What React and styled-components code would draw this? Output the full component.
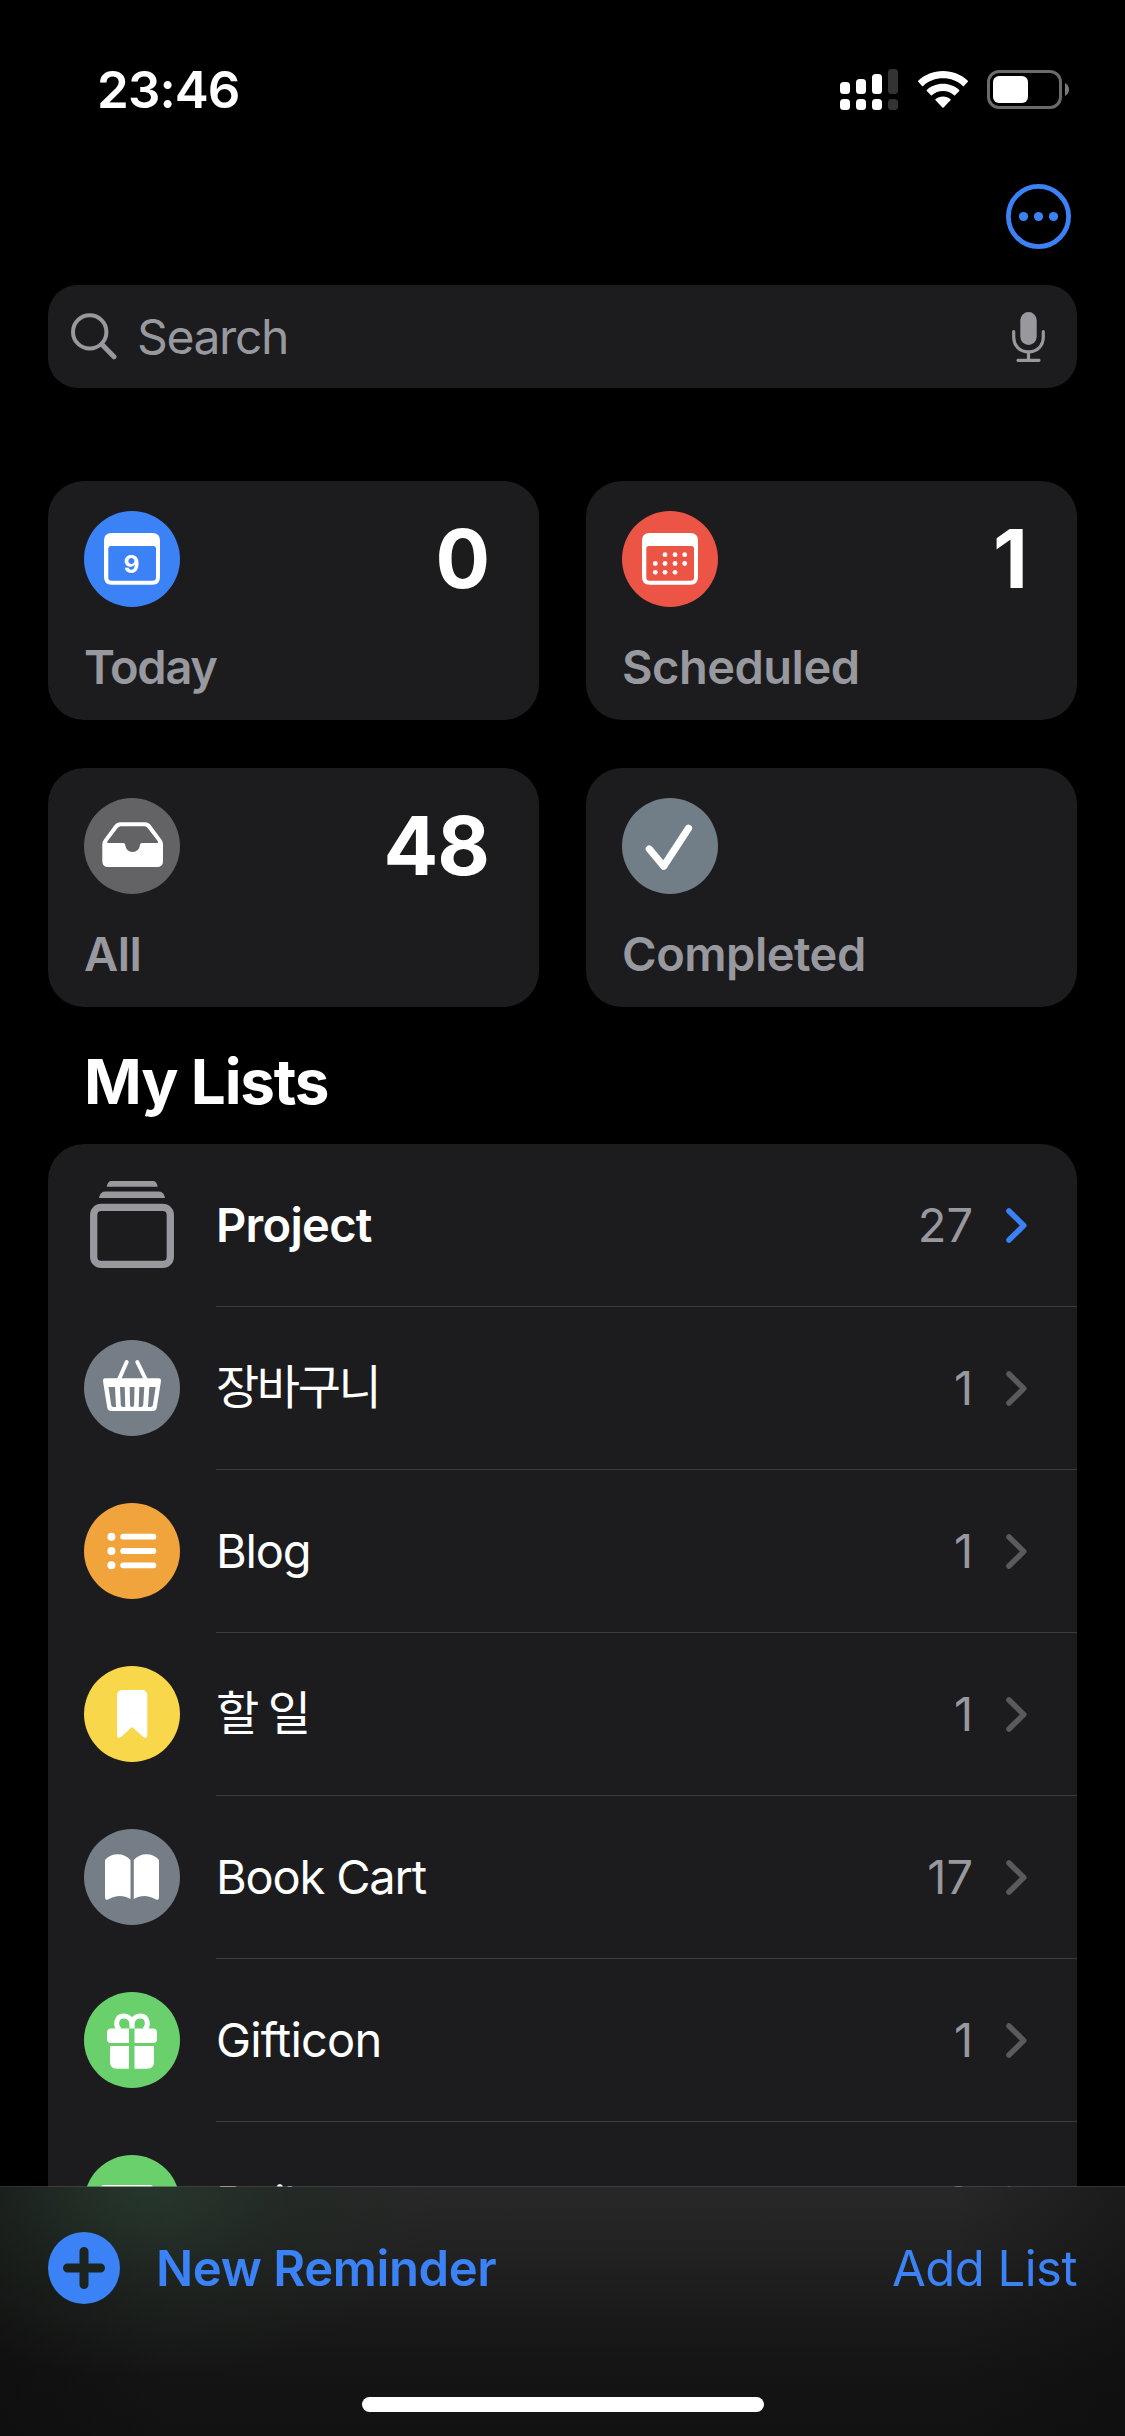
import styled, { createGlobalStyle } from "styled-components";

const GlobalStyle = createGlobalStyle`
  * {
    box-sizing: border-box;
  }
  body {
    margin: 0;
    background: #000;
    color: #fff;
    font-family: Inter, "Noto Sans CJK KR", sans-serif;
  }
`;

const Screen = styled.div`
  position: relative;
  width: 1125px;
  height: 2436px;
  overflow: hidden;
  background: #000;
`;

const StatusBar = styled.div`
  height: 178px;
  display: flex;
  align-items: center;
  justify-content: space-between;
  padding: 0 56px 0 97px;
`;

const Time = styled.span`
  font-size: 51px;
  font-weight: 600;
  letter-spacing: -0.9px;
`;

const StatusIcons = styled.div`
  display: flex;
  align-items: center;
  gap: 19px;
`;

const Toolbar = styled.div`
  height: 107px;
  display: flex;
  justify-content: flex-end;
  padding: 6px 54px 0 0;
`;

const SearchBar = styled.div`
  height: 103px;
  margin: 0 48px;
  padding: 0 32px 0 23px;
  display: flex;
  align-items: center;
  gap: 20px;
  border-radius: 30px;
  background: #1c1c1e;
  color: #98989f;
`;

const Placeholder = styled.span`
  flex: 1;
  font-size: 48px;
  letter-spacing: -1.4px;
`;

const CardGrid = styled.div`
  display: grid;
  grid-template-columns: 491px 491px;
  grid-auto-rows: 239px;
  gap: 48px 47px;
  margin: 93px 48px 0;
`;

const Card = styled.div`
  display: flex;
  flex-direction: column;
  justify-content: space-between;
  padding: 30px 50px 24px 36px;
  border-radius: 36px;
  background: #1c1c1e;
`;

const CardTop = styled.div`
  height: 96px;
  display: flex;
  align-items: center;
  justify-content: space-between;
`;

const CardCount = styled.span`
  font-size: 81px;
  font-weight: 700;
  line-height: 96px;
  letter-spacing: -1px;
`;

const CardLabel = styled.span`
  font-size: 47px;
  font-weight: 600;
  line-height: 58px;
  color: #98989f;
  letter-spacing: ${(props) => props.$spacing};
`;

const IconCircle = styled.div`
  width: 96px;
  height: 96px;
  border-radius: 50%;
  flex-shrink: 0;
  background: ${(props) => props.$color};
`;

const SectionTitle = styled.h2`
  height: 137px;
  margin: 0;
  padding: 12px 0 0 84px;
  display: flex;
  align-items: center;
  font-size: 62px;
  font-weight: 700;
  letter-spacing: -1.2px;
`;

const ListBox = styled.div`
  margin: 0 48px;
  padding-left: 36px;
  border-radius: 36px 36px 0 0;
  background: #1c1c1e;
`;

const ListRow = styled.div`
  height: 163px;
  display: flex;
  gap: 36px;
`;

const RowIcon = styled.div`
  padding-top: 33px;
`;

const RowBody = styled.div`
  flex: 1;
  display: flex;
  align-items: center;
  padding-right: 50px;
  border-bottom: 1px solid #3d3d41;
`;

const RowName = styled.span`
  flex: 1;
  padding-bottom: ${(props) => (props.$korean ? "9px" : "2px")};
  font-size: 47px;
  font-weight: ${(props) => (props.$bold ? 600 : 400)};
  letter-spacing: ${(props) => props.$spacing};
`;

const RowCount = styled.span`
  margin-right: 33px;
  padding-bottom: 2px;
  font-size: 47px;
  color: #98989f;
`;

const BottomBar = styled.div`
  position: absolute;
  left: 0;
  right: 0;
  bottom: 0;
  height: 250px;
  display: flex;
  flex-direction: column;
  align-items: center;
  border-top: 1px solid rgba(84, 84, 88, 0.6);
  background:
    radial-gradient(
      ellipse 290px 190px at 145px 0px,
      rgba(38, 60, 46, 0.75),
      rgba(30, 44, 34, 0.4) 50%,
      rgba(20, 24, 20, 0)
    ),
    linear-gradient(
      90deg,
      rgba(12, 12, 12, 0.55),
      rgba(12, 12, 12, 0) 15%,
      rgba(12, 12, 12, 0) 85%,
      rgba(12, 12, 12, 0.45)
    ),
    linear-gradient(#282828, #222 25%, #191919 55%, #141414 75%, #121212);
  background-clip: padding-box;
`;

const Actions = styled.div`
  width: 100%;
  height: 162px;
  padding: 0 48px;
  display: flex;
  align-items: center;
  justify-content: space-between;
  color: #3b82f7;
`;

const NewReminder = styled.div`
  display: flex;
  align-items: center;
  gap: 36px;
  font-size: 49px;
  font-weight: 600;
  letter-spacing: -0.4px;
`;

const AddList = styled.span`
  font-size: 49px;
  letter-spacing: -0.5px;
`;

const HomeIndicator = styled.div`
  width: 402px;
  height: 15px;
  margin-top: 48px;
  border-radius: 8px;
  background: #fff;
`;

function SignalIcon() {
  const bars = [12, 15, 20, 25];
  return (
    <svg width="59" height="41" viewBox="0 0 59 41">
      {bars.map((h, i) => (
        <g key={h} fill={i === 3 ? "#333" : "#fff"}>
          <rect x={i * 16} y={25 - h} width="10" height={h} rx="3.5" />
          <rect x={i * 16} y="30" width="10" height="11" rx="3.5" />
        </g>
      ))}
    </svg>
  );
}

function WifiIcon() {
  return (
    <svg width="50" height="37" viewBox="0 0 50 37" fill="#fff">
      <path d="M25 0C34.5 0 43.3 3.6 49.8 9.7Q50.3 10.2 49.8 10.7L45.9 14.9Q45.4 15.4 44.8 14.9C39.5 9.9 32.5 7.3 25 7.3S10.5 9.9 5.2 14.9Q4.6 15.4 4.1 14.9L.2 10.7Q-.3 10.2 .2 9.7C6.7 3.6 15.5 0 25 0Z" />
      <path d="M25 12.8C31.2 12.8 36.9 15.1 41.2 19Q41.7 19.5 41.2 20L37.1 24.3Q36.6 24.8 36.1 24.3C33.1 21.6 29.3 20.1 25 20.1S16.9 21.6 13.9 24.3Q13.4 24.8 12.9 24.3L8.8 20Q8.3 19.5 8.8 19C13.1 15.1 18.8 12.8 25 12.8Z" />
      <path d="M25 25.6C27.8 25.6 30.5 26.6 32.5 28.3Q33 28.8 32.5 29.3L25.6 36.5Q25 37 24.4 36.5L17.5 29.3Q17 28.8 17.5 28.3C19.5 26.6 22.2 25.6 25 25.6Z" />
    </svg>
  );
}

function BatteryIcon() {
  return (
    <svg width="82" height="39" viewBox="0 0 82 39">
      <rect x="1.5" y="1.5" width="72" height="36" rx="10.5" fill="none" stroke="#6b6b6b" strokeWidth="3" />
      <rect x="6" y="6" width="35" height="27" rx="6" fill="#fff" />
      <path d="M78 13C80.6 14.2 82 16.7 82 19.5S80.6 24.8 78 26Z" fill="#7a7a7a" />
    </svg>
  );
}

function MoreIcon() {
  return (
    <svg width="65" height="65" viewBox="0 0 65 65" fill="#3b82f7">
      <circle cx="32.5" cy="32.5" r="30.1" fill="none" stroke="#3b82f7" strokeWidth="4.8" />
      <circle cx="17.5" cy="32.5" r="4.6" />
      <circle cx="32.5" cy="32.5" r="4.6" />
      <circle cx="47.5" cy="32.5" r="4.6" />
    </svg>
  );
}

function SearchIcon() {
  return (
    <svg width="46" height="47" viewBox="0 0 46 47" fill="none" stroke="currentColor" strokeLinecap="round">
      <circle cx="18.7" cy="18.9" r="16.7" strokeWidth="4" />
      <path d="M31.5 32L43 43.8" strokeWidth="5" />
    </svg>
  );
}

function MicIcon() {
  return (
    <svg width="33" height="50" viewBox="0 0 33 50" fill="none" stroke="currentColor" strokeWidth="3.2" strokeLinecap="round">
      <rect x="8.3" y="0" width="16.4" height="33" rx="8.2" fill="currentColor" stroke="none" />
      <path d="M1.7 19.5V25C1.7 34 8 39.8 16.5 39.8S31.3 34 31.3 25V19.5M16.5 40V48M6 48.3H27" />
    </svg>
  );
}

function Chevron({ color }) {
  return (
    <svg width="21" height="35" viewBox="0 0 21 35" fill="none" stroke={color} strokeWidth="5.6" strokeLinecap="round" strokeLinejoin="round">
      <path d="M3 3L17.7 17.5L3 32" />
    </svg>
  );
}

function PlusIcon() {
  return (
    <svg width="72" height="72" viewBox="0 0 72 72">
      <circle cx="36" cy="36" r="36" fill="#3b82f7" />
      <path d="M36 19.5V52.5M19.5 36H52.5" stroke="#1c241f" strokeWidth="9" strokeLinecap="round" />
    </svg>
  );
}

const Glyph = ({ children }) => (
  <svg width="96" height="96" viewBox="0 0 96 96" fill="#fff" display="block">
    {children}
  </svg>
);

const calendarFrame =
  "M27.5 22H68.5Q76 22 76 29.5V66Q76 73.7 68.5 73.7H27.5Q20 73.7 20 66V29.5Q20 22 27.5 22ZM27 35Q24.3 35 24.3 37.5V66.5Q24.3 69.7 27.5 69.7H68.5Q72 69.7 72 66.5V37.5Q72 35 69.3 35Z";

const TodayGlyph = () => (
  <Glyph>
    <path fillRule="evenodd" d={calendarFrame} />
    <text x="47.5" y="61.5" textAnchor="middle" fontSize="24.5" fontWeight="700">
      9
    </text>
  </Glyph>
);

const ScheduledGlyph = () => {
  const rows = [
    [43, 53, 62.7],
    [33.3, 43, 53, 62.7],
    [33.3, 43, 53],
  ];
  return (
    <Glyph>
      <path fillRule="evenodd" d={calendarFrame} />
      {rows.map((row, i) =>
        row.map((x) => <circle key={`${i}-${x}`} cx={x} cy={43.7 + i * 8.8} r="2.4" />)
      )}
    </Glyph>
  );
};

const AllGlyph = () => (
  <Glyph>
    <path
      fillRule="evenodd"
      d="M36.5 24.3H61Q64.7 24.3 66.8 27.3L77.3 41.5Q79 43.8 79 46.5V63Q79 69 73 69H24.3Q18.3 69 18.3 63V46.5Q18.3 43.8 20 41.5L30.5 27.3Q32.7 24.3 36.5 24.3ZM36.7 28.3Q34.9 28.3 33.8 29.8L23.3 43.5Q22.5 45 24.5 45H39.3Q41 45 41.2 46.8C41.7 51.2 44.4 54 48.6 54S55.5 51.2 56 46.8Q56.2 45 57.9 45H72.8Q74.8 45 74 43.5L63.5 29.8Q62.4 28.3 60.6 28.3Z"
    />
  </Glyph>
);

const CheckGlyph = () => (
  <Glyph>
    <path d="M27.3 51L41.7 68.2L66.5 30.3" fill="none" stroke="#fff" strokeWidth="7.2" strokeLinecap="round" strokeLinejoin="round" />
  </Glyph>
);

const StackGlyph = () => (
  <Glyph>
    <g fill="#98989f">
      <path d="M27.5 4H69Q72.7 4 73.7 9.8H22.7Q23.7 4 27.5 4Z" />
      <path d="M21 14.5H75Q80 14.5 81 21H15Q16 14.5 21 14.5Z" />
    </g>
    <rect x="9.7" y="30.4" width="76.6" height="57" rx="7.5" fill="none" stroke="#98989f" strokeWidth="7.3" />
  </Glyph>
);

const BasketGlyph = () => (
  <Glyph>
    <path d="M42.7 22L34.7 40M53.3 22L62 40" stroke="#fff" strokeWidth="4" strokeLinecap="round" />
    <path
      fillRule="evenodd"
      d="M21.3 38.3H74.7Q77.3 38.3 77 41L72.8 67.5Q72.2 71 68.7 71H27.3Q23.8 71 23.2 67.5L19 41Q18.7 38.3 21.3 38.3ZM24.5 47L27.2 65Q27.5 67 29.3 67H32L31 47ZM36 47L36.8 65Q37 67 39 67H41.3L40.7 47ZM45.7 47L46 65Q46 67 48 67T50.1 65L50.5 47ZM55.3 47L54.7 67H57Q59 67 59.2 65L60.3 47ZM65.3 47L64 67H66.5Q68.5 67 68.9 65L71.7 47Z"
    />
  </Glyph>
);

const BulletGlyph = () => (
  <Glyph>
    {[33.7, 48, 62.3].map((y) => (
      <g key={y}>
        <circle cx="27.4" cy={y} r="4" />
        <rect x="36.3" y={y - 2.9} width="36" height="5.8" rx="2.9" />
      </g>
    ))}
  </Glyph>
);

const BookmarkGlyph = () => (
  <Glyph>
    <path d="M38.5 24H57.8Q63.3 24 63.3 29.5V69.5Q63.3 71.7 61 71.7Q60 71.7 59 70.7L48 61L37.3 70.7Q36.3 71.7 35.3 71.7Q33 71.7 33 69.5V29.5Q33 24 38.5 24Z" />
  </Glyph>
);

const BookGlyph = () => (
  <Glyph>
    <path d="M46.5 31V70C40 66 32 66 26 69.5Q21 72.5 21 68.5V31C27 23.2 40 23.2 46.5 31Z" />
    <path d="M49.8 31V70C56 66 64 66 70 69.5Q75 72.5 75 68.5V31C69 23.2 56.3 23.2 49.8 31Z" />
  </Glyph>
);

const GiftGlyph = () => (
  <Glyph>
    <path d="M45 36.5V51H27Q23 51 23 47V40.5Q23 36.5 27 36.5ZM50.5 36.5H69Q73 36.5 73 40.5V47Q73 51 69 51H50.5Z" />
    <path d="M45 54V76.7H33Q26 76.7 26 70V54ZM50.5 54H70V70Q70 76.7 63 76.7H50.5Z" />
    <path
      d="M35.5 37.5C30.5 33 32.5 23.9 39.3 23.9C44.5 23.9 47.9 27.5 47.9 32V36.5M60.5 37.5C65.5 33 63.5 23.9 56.7 23.9C51.5 23.9 48.1 27.5 48.1 32V36.5"
      fill="none"
      stroke="#fff"
      strokeWidth="5"
    />
  </Glyph>
);

const ScreenGlyph = () => (
  <Glyph>
    <rect x="17.5" y="30" width="51" height="42" rx="1.5" />
  </Glyph>
);

const cards = [
  { label: "Today", count: 0, color: "#3b82f7", Icon: TodayGlyph, spacing: "-1.3px" },
  { label: "Scheduled", count: 1, color: "#ec5545", Icon: ScheduledGlyph },
  { label: "All", count: 48, color: "#636366", Icon: AllGlyph },
  { label: "Completed", color: "#727e87", Icon: CheckGlyph },
];

const lists = [
  { name: "Project", count: 27, Icon: StackGlyph, group: true, spacing: "-0.7px" },
  { name: "장바구니", count: 1, color: "#757d87", Icon: BasketGlyph, spacing: "-2.4px", korean: true },
  { name: "Blog", count: 1, color: "#f1a33c", Icon: BulletGlyph },
  { name: "할 일", count: 1, color: "#f8d74a", Icon: BookmarkGlyph, spacing: "-2.4px", korean: true },
  { name: "Book Cart", count: 17, color: "#757d87", Icon: BookGlyph },
  { name: "Gifticon", count: 1, color: "#69d06c", Icon: GiftGlyph, spacing: "-0.8px" },
  { name: "Daily", count: 2, color: "#69d06c", Icon: ScreenGlyph },
];

export default function App() {
  return (
    <Screen>
      <GlobalStyle />
      <StatusBar>
        <Time>23:46</Time>
        <StatusIcons>
          <SignalIcon />
          <WifiIcon />
          <BatteryIcon />
        </StatusIcons>
      </StatusBar>
      <Toolbar>
        <MoreIcon />
      </Toolbar>
      <SearchBar>
        <SearchIcon />
        <Placeholder>Search</Placeholder>
        <MicIcon />
      </SearchBar>

      <CardGrid>
        {cards.map(({ label, count, color, Icon, spacing }) => (
          <Card key={label}>
            <CardTop>
              <IconCircle $color={color}>
                <Icon />
              </IconCircle>
              <CardCount>{count}</CardCount>
            </CardTop>
            <CardLabel $spacing={spacing || "-0.5px"}>{label}</CardLabel>
          </Card>
        ))}
      </CardGrid>

      <SectionTitle>My Lists</SectionTitle>
      <ListBox>
        {lists.map(({ name, count, color, Icon, group, spacing, korean }) => (
          <ListRow key={name}>
            <RowIcon>
              <IconCircle $color={color || "none"}>
                <Icon />
              </IconCircle>
            </RowIcon>
            <RowBody>
              <RowName $bold={group} $korean={korean} $spacing={spacing || "-1.2px"}>
                {name}
              </RowName>
              <RowCount>{count}</RowCount>
              <Chevron color={group ? "#3b82f7" : "#5a5a5e"} />
            </RowBody>
          </ListRow>
        ))}
      </ListBox>

      <BottomBar>
        <Actions>
          <NewReminder>
            <PlusIcon />
            New Reminder
          </NewReminder>
          <AddList>Add List</AddList>
        </Actions>
        <HomeIndicator />
      </BottomBar>
    </Screen>
  );
}
